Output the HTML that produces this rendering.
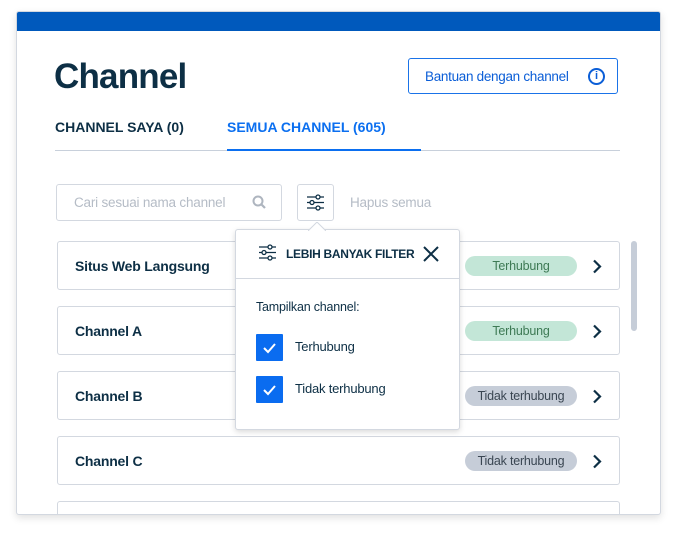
<!DOCTYPE html>
<html><head><meta charset="utf-8"><style>
*{box-sizing:border-box;margin:0;padding:0}
body{width:677px;height:536px;background:#fff;font-family:"Liberation Sans",sans-serif;position:relative;overflow:hidden;color:#0d2f45}
.card{position:absolute;left:16px;top:11px;width:645px;height:504px;background:#fff;border:1px solid #d3d8e0;border-radius:3px;box-shadow:0 3px 8px rgba(0,0,0,.12);overflow:hidden}
.bar{position:absolute;left:0;top:0;right:0;height:19px;background:#0059bc}
.abs{position:absolute}
h1{position:absolute;left:37px;top:45px;font-size:35px;font-weight:bold;color:#0d2f45;letter-spacing:-0.8px}
.btn{left:391px;top:46px;width:210px;height:36px;border:1px solid #1a73e8;border-radius:3px;color:#0b5ed7;font-size:13.5px;letter-spacing:-0.3px;padding:10px 0 0 16px}
.info{position:absolute;right:12px;top:9px;width:17px;height:17px;border:2px solid #0b5ed7;border-radius:50%;font-size:11px;font-weight:bold;text-align:center;line-height:13px;letter-spacing:0}
.tab{font-size:14px;font-weight:bold;top:107px}
.row{position:absolute;left:40px;width:563px;height:49px;border:1px solid #d3d8e0;border-radius:3px}
.row .n{position:absolute;left:17px;top:16px;font-size:14px;font-weight:bold;letter-spacing:-0.2px}
.badge{position:absolute;left:407px;top:14px;width:112px;height:20px;border-radius:10px;font-size:12.5px;text-align:center;line-height:20px;letter-spacing:-0.2px}
.g{background:#c3e6d7;color:#3e7a55}.gr{background:#c6cdd8;color:#3a4652}
.chev{position:absolute;left:534px;top:17px}
.pop{position:absolute;left:235px;top:229px;width:225px;height:201px;background:#fff;border:1px solid #d3d8e0;border-radius:3px;box-shadow:0 2px 6px rgba(0,0,0,.15)}
.cb{position:absolute;left:20px;width:27px;height:27px;background:#0a6cf0;border-radius:1px}
</style></head><body>
<div class="card">
<div class="bar"></div>
<h1>Channel</h1>
<div class="abs btn">Bantuan dengan channel<div class="info">i</div></div>
<div class="abs tab" style="left:38px">CHANNEL SAYA (0)</div>
<div class="abs tab" style="left:210px;color:#0b6ff0">SEMUA CHANNEL (605)</div>
<div class="abs" style="left:38px;top:138px;width:565px;height:1px;background:#c8d0db"></div>
<div class="abs" style="left:210px;top:137px;width:194px;height:2px;background:#0b6ff0"></div>
<div class="abs" style="left:39px;top:172px;width:226px;height:37px;border:1px solid #d3d8e0;border-radius:3px;font-size:13.5px;letter-spacing:-0.2px;color:#b5bcc6;padding:10px 0 0 17px">Cari sesuai nama channel
<svg style="position:absolute;left:195px;top:10px" width="15" height="15" viewBox="0 0 15 15"><circle cx="6" cy="6" r="4.5" fill="none" stroke="#aeb5bf" stroke-width="2"/><path d="M9.5 9.5L13 13" stroke="#aeb5bf" stroke-width="2.2"/></svg></div>
<div class="abs" style="left:280px;top:172px;width:37px;height:37px;border:1px solid #d3d8e0;border-radius:3px">
<svg style="position:absolute;left:8px;top:9px" width="19" height="17" viewBox="0 0 19 17" fill="none" stroke="#0d2f45" stroke-width="1.3"><path d="M1 3h17M1 8.5h17M1 14h17"/><circle cx="12" cy="3" r="2" fill="#fff"/><circle cx="6" cy="8.5" r="2" fill="#fff"/><circle cx="12" cy="14" r="2" fill="#fff"/></svg></div>
<div class="abs" style="left:333px;top:183px;font-size:13.5px;letter-spacing:-0.2px;color:#b5bcc6">Hapus semua</div>
<div class="abs" style="left:614px;top:229px;width:6px;height:90px;border-radius:3px;background:#c6cdd8"></div>
<div class="row" style="top:229px"><div class="n">Situs Web Langsung</div><div class="badge g">Terhubung</div><svg class="chev" width="10" height="15"><path d="M2 1.5l6 6-6 6" fill="none" stroke="#0d2f45" stroke-width="2.2"/></svg></div>
<div class="row" style="top:294px"><div class="n">Channel A</div><div class="badge g">Terhubung</div><svg class="chev" width="10" height="15"><path d="M2 1.5l6 6-6 6" fill="none" stroke="#0d2f45" stroke-width="2.2"/></svg></div>
<div class="row" style="top:359px"><div class="n">Channel B</div><div class="badge gr">Tidak terhubung</div><svg class="chev" width="10" height="15"><path d="M2 1.5l6 6-6 6" fill="none" stroke="#0d2f45" stroke-width="2.2"/></svg></div>
<div class="row" style="top:424px"><div class="n">Channel C</div><div class="badge gr">Tidak terhubung</div><svg class="chev" width="10" height="15"><path d="M2 1.5l6 6-6 6" fill="none" stroke="#0d2f45" stroke-width="2.2"/></svg></div>
<div class="row" style="top:489px"></div>
</div>
<div class="pop">
<svg style="position:absolute;left:72px;top:-8px" width="18" height="9"><path d="M0 9L9 0L18 9" fill="#fff" stroke="#d3d8e0"/></svg>
<svg style="position:absolute;left:22px;top:14px" width="19" height="17" viewBox="0 0 19 17" fill="none" stroke="#0d2f45" stroke-width="1.3"><path d="M1 3h17M1 8.5h17M1 14h17"/><circle cx="12" cy="3" r="2" fill="#fff"/><circle cx="6" cy="8.5" r="2" fill="#fff"/><circle cx="12" cy="14" r="2" fill="#fff"/></svg>
<div class="abs" style="left:50px;top:17px;font-size:12px;letter-spacing:-0.3px;font-weight:bold">LEBIH BANYAK FILTER</div>
<svg style="position:absolute;left:187px;top:16px" width="16" height="16"><path d="M1 1l14 14M15 1L1 15" stroke="#0d2f45" stroke-width="2"/></svg>
<div class="abs" style="left:0;top:48px;width:223px;height:1px;background:#d3d8e0"></div>
<div class="abs" style="left:20px;top:70px;font-size:12.5px;letter-spacing:-0.2px">Tampilkan channel:</div>
<div class="cb" style="top:104px"><svg width="27" height="27"><path d="M8 14l4 4 7-8" fill="none" stroke="#fff" stroke-width="2"/></svg></div>
<div class="abs" style="left:59px;top:109px;font-size:13px;letter-spacing:-0.2px">Terhubung</div>
<div class="cb" style="top:146px"><svg width="27" height="27"><path d="M8 14l4 4 7-8" fill="none" stroke="#fff" stroke-width="2"/></svg></div>
<div class="abs" style="left:59px;top:151px;font-size:13px;letter-spacing:-0.2px">Tidak terhubung</div>
</div>
</body></html>
